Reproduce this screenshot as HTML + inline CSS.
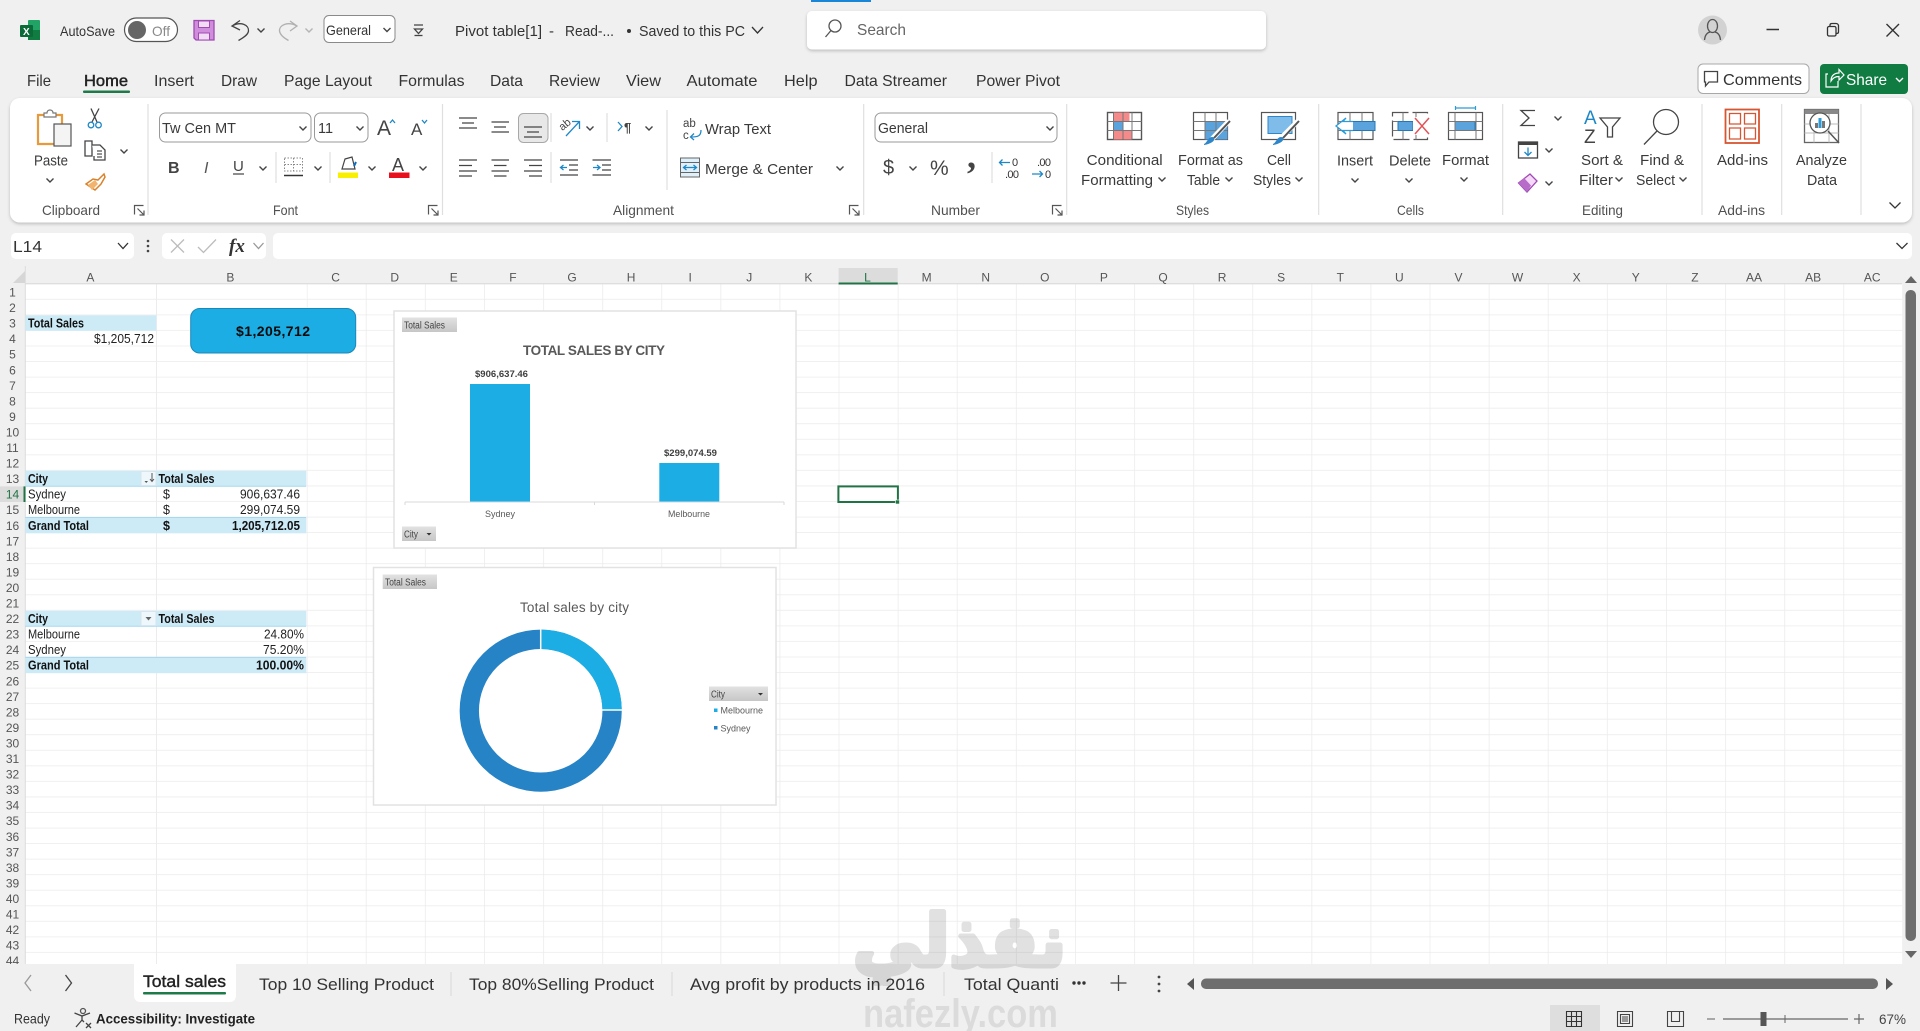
<!DOCTYPE html>
<html lang="en"><head><meta charset="utf-8"><title>Pivot table[1] - Excel</title>
<style>
html,body{margin:0;padding:0;width:1920px;height:1031px;overflow:hidden;background:#f0f0f0}
svg{display:block;position:absolute;left:0;top:0}
text{font-family:"Liberation Sans",sans-serif;fill:#333;font-size:15px}
.t{font-size:16px}
.r{font-size:14.5px;fill:#3a3a3a}
.g{font-size:14px;fill:#505050}
.rh{font-size:12px;fill:#555;text-anchor:middle}
.c{font-size:12.5px;fill:#222}
.b{font-weight:bold;fill:#111}
.cb{font-size:10px;fill:#444}
.i{fill:none;stroke:#555;stroke-width:1.3}
</style></head><body>
<svg width="1920" height="1031" viewBox="0 0 1920 1031" xmlns="http://www.w3.org/2000/svg">
<defs>
<path id="c" d="M-3.5 -1.5L0 2L3.5 -1.5" fill="none" stroke="#444" stroke-width="1.4"/>
<path id="l" d="M0 9V0H9M3 3L9.5 9.5M9.5 5V9.5H5" fill="none" stroke="#555" stroke-width="1.2"/>
<pattern id="ph" width="10" height="15.55" patternUnits="userSpaceOnUse" patternTransform="translate(0 284.2)"><rect y="14.75" width="10" height=".8" fill="#ececec"/></pattern>
<pattern id="pv" width="59.1" height="10" patternUnits="userSpaceOnUse" patternTransform="translate(306.7 0)"><rect width=".8" height="10" fill="#ececec"/></pattern>
<linearGradient id="bt" x1="0" y1="0" x2="0" y2="1"><stop offset="0" stop-color="#e2e2e2"/><stop offset="1" stop-color="#c6c6c6"/></linearGradient>
<filter id="sh" x="-2%" y="-10%" width="104%" height="125%"><feDropShadow dx="0" dy="1.5" stdDeviation="1.5" flood-color="#000" flood-opacity=".22"/></filter>
</defs>
<rect width="1920" height="1031" fill="#f0f0f0"/>

<!-- title bar -->
<rect x="811" y="0" width="60" height="2" fill="#1a86d8"/>
<rect x="28" y="20" width="12" height="20" rx="1" fill="#21a366"/><rect x="28" y="30" width="12" height="10" fill="#107c41"/><rect x="20" y="25" width="13" height="12" rx="1" fill="#0b6a38"/>
<text x="23" y="35" style="font-size:10px;font-weight:bold;fill:#fff">X</text>
<text x="60" y="36" textLength="55" lengthAdjust="spacingAndGlyphs" style="font-size:14px">AutoSave</text>
<rect x="124.500" y="18" width="53" height="23.500" rx="11.700" fill="#fff" stroke="#555" stroke-width="1.200"/><circle cx="137" cy="30" r="9" fill="#666"/>
<text x="152" y="36" textLength="18" lengthAdjust="spacingAndGlyphs" style="font-size:14px;fill:#8a8a8a">Off</text>
<path d="M194 20.500H214V40H196L194 38Z" fill="#d08ddc" stroke="#a04ab3" stroke-width="1.300"/><rect x="198.500" y="21" width="11" height="6.500" fill="#f2dcf5" stroke="#a04ab3"/><rect x="198.500" y="33" width="11" height="7" fill="#f2dcf5" stroke="#a04ab3"/>
<path d="M240 20.500L232 26L240 30M232 26C241 21 249 25 248.500 31C248 35 243 38 238.500 40.500" class="i" style="stroke:#444"/><use href="#c" x="261" y="30"/>
<path d="M290 21L297 26L290 31M297 26C288 21 279 25 279.500 31C280 35 284 38 288.500 40.500" class="i" style="stroke:#b0b0b0"/><use href="#c" x="309" y="30" opacity=".35"/>
<rect x="324" y="15.500" width="71" height="27" rx="5" fill="#fff" stroke="#8a8a8a"/>
<text x="326" y="35" textLength="45" lengthAdjust="spacingAndGlyphs" style="font-size:14px">General</text><use href="#c" x="387" y="29.500"/>
<path d="M414 25H423M414.500 29H422.500L418.500 33.500Z" class="i" style="stroke:#444"/><path d="M414.500 35.500H422.500" class="i" style="stroke:#444"/>
<text x="455" y="36" textLength="87" lengthAdjust="spacingAndGlyphs" class="t" style="font-size:15px">Pivot table[1]</text>
<text x="549" y="36" style="font-size:15px">-</text>
<text x="565" y="36" textLength="49" lengthAdjust="spacingAndGlyphs" style="font-size:15px">Read-...</text>
<circle cx="629" cy="31" r="2" fill="#333"/>
<text x="639" y="36" textLength="106" lengthAdjust="spacingAndGlyphs" style="font-size:15px">Saved to this PC</text>
<path d="M752 27L757.500 33L763 27" class="i" style="stroke:#333"/>
<rect x="807" y="11" width="459" height="38.500" rx="5" fill="#fff" filter="url(#sh)"/>
<circle cx="835" cy="26" r="6" class="i"/><path d="M831 30.500L825.500 37" class="i"/>
<text x="857" y="35" textLength="49" lengthAdjust="spacingAndGlyphs" style="font-size:16px;fill:#666">Search</text>
<circle cx="1712.500" cy="30" r="14.500" fill="#d2d2d2"/><ellipse cx="1712.500" cy="26" rx="5" ry="6.500" class="i"/><path d="M1704.500 40C1705 34 1708 32.500 1710 32M1720.500 40C1720 34 1717 32.500 1715 32" class="i"/>
<path d="M1766.500 29.500H1779" stroke="#333" stroke-width="1.500"/>
<rect x="1827.500" y="26.500" width="8.500" height="9.500" rx="1.500" class="i" style="stroke:#333"/><path d="M1830 26V25C1830 24 1831 23.500 1832 23.500H1836C1837.500 23.500 1838.500 24.500 1838.500 26V32C1838.500 33 1838 33.500 1836.500 33.500" class="i" style="stroke:#333"/>
<path d="M1886.500 24L1899 36.500M1899 24L1886.500 36.500" stroke="#333" stroke-width="1.400"/>

<!-- menu tabs -->
<text x="27" y="86" textLength="24" lengthAdjust="spacingAndGlyphs" class="t">File</text>
<text x="84" y="86" textLength="44" lengthAdjust="spacingAndGlyphs" class="t" style="fill:#222;stroke:#222;stroke-width:.45">Home</text>
<text x="154" y="86" textLength="40" lengthAdjust="spacingAndGlyphs" class="t">Insert</text>
<text x="221" y="86" textLength="36" lengthAdjust="spacingAndGlyphs" class="t">Draw</text>
<text x="284" y="86" textLength="88" lengthAdjust="spacingAndGlyphs" class="t">Page Layout</text>
<text x="398.500" y="86" textLength="66" lengthAdjust="spacingAndGlyphs" class="t">Formulas</text>
<text x="490" y="86" textLength="33" lengthAdjust="spacingAndGlyphs" class="t">Data</text>
<text x="549" y="86" textLength="51" lengthAdjust="spacingAndGlyphs" class="t">Review</text>
<text x="626" y="86" textLength="35" lengthAdjust="spacingAndGlyphs" class="t">View</text>
<text x="686.500" y="86" textLength="71" lengthAdjust="spacingAndGlyphs" class="t">Automate</text>
<text x="784" y="86" textLength="33.500" lengthAdjust="spacingAndGlyphs" class="t">Help</text>
<text x="844.500" y="86" textLength="102.500" lengthAdjust="spacingAndGlyphs" class="t">Data Streamer</text>
<text x="976" y="86" textLength="84" lengthAdjust="spacingAndGlyphs" class="t">Power Pivot</text>
<rect x="83" y="90.500" width="47" height="2.500" rx="1" fill="#1f7a4a"/>
<rect x="1698" y="64" width="111" height="29.500" rx="5" fill="#fff" stroke="#a8a8a8"/>
<path d="M1704.500 71.500H1717.500V82H1709L1705.500 86V82H1704.500Z" class="i" style="stroke:#444"/>
<text x="1723" y="85" textLength="79" lengthAdjust="spacingAndGlyphs" class="t">Comments</text>
<rect x="1820" y="64" width="88" height="30" rx="4" fill="#107c41"/>
<path d="M1828 74H1826V87H1838V81M1831 81C1831 75 1835 73 1839 73V69.500L1844 75L1839 80V76.500C1835 76.500 1833 78 1831 81Z" fill="none" stroke="#fff" stroke-width="1.200"/>
<text x="1846" y="85" textLength="41" lengthAdjust="spacingAndGlyphs" class="t" style="fill:#fff">Share</text>
<path d="M1896 78L1899.500 81.500L1903 78" fill="none" stroke="#fff" stroke-width="1.400"/>

<!-- ribbon -->
<rect x="10" y="98" width="1902" height="124.500" rx="10" fill="#fff" filter="url(#sh)"/>
<g stroke="#dfdfdf" stroke-width="1.200">
<path d="M148 104V215M442.500 104V215M863.700 104V215M1066.700 104V215M1318.700 104V215M1502.700 104V215M1702 104V215M1781.700 104V215M1861 104V215"/>
<path d="M276 152V183M330 152V183M551 113V142M551 152V183M607 113V142M667 110V190M992 152V183"/>
</g>

<!-- clipboard -->
<path d="M38 115H62V144H38Z" fill="#fff" stroke="#e69a3c" stroke-width="2.200"/>
<path d="M44 117V113H47C47 109 53 109 53 113H56V117Z" fill="#fff" stroke="#777" stroke-width="1.200"/>
<rect x="54" y="124" width="17" height="22" fill="#f4f4f4" stroke="#555" stroke-width="1.200"/>
<text x="34" y="165.500" textLength="34" lengthAdjust="spacingAndGlyphs" class="r">Paste</text><use href="#c" x="50" y="180"/>
<path d="M91 108.500L97 122M99 108.500L92 122" class="i" style="stroke:#444"/><circle cx="91" cy="125" r="2.800" class="i" style="stroke:#1e88c7"/><circle cx="98.500" cy="125" r="2.800" class="i" style="stroke:#1e88c7"/>
<path d="M85 141H92V156H85Z" class="i" style="stroke:#444"/><path d="M92 145H100L105 150V160H94V156" class="i" style="stroke:#444;fill:#fff"/><path d="M97 151H102M97 154H102M97 157H102" class="i"/>
<use href="#c" x="124" y="151"/>
<path d="M98 180L104 174L105 177L101 184L95 190L86 184L93 179Z" fill="none" stroke="#d9822b" stroke-width="1.500"/><path d="M88 185L95 180L98 184L92 190Z" fill="#f2b36d"/>
<text x="42" y="215" textLength="58" lengthAdjust="spacingAndGlyphs" class="g">Clipboard</text><use href="#l" x="134.500" y="205.500"/>

<!-- font -->
<rect x="159.500" y="113" width="151.500" height="29" rx="6" fill="#fff" stroke="#9a9a9a"/>
<text x="162" y="133" textLength="74" lengthAdjust="spacingAndGlyphs" class="r">Tw Cen MT</text><use href="#c" x="303" y="128"/>
<rect x="314.500" y="113" width="53.500" height="29" rx="6" fill="#fff" stroke="#9a9a9a"/>
<text x="318" y="133" class="r">11</text><use href="#c" x="360" y="128"/>
<text x="377" y="135" style="font-size:21px;fill:#444">A</text><path d="M390 123L392.500 120L395 123" fill="none" stroke="#1e88c7" stroke-width="1.300"/>
<text x="411" y="135" style="font-size:17px;fill:#444">A</text><path d="M422 120L424.500 123L427 120" fill="none" stroke="#1e88c7" stroke-width="1.300"/>
<text x="168" y="173" style="font-size:16px;font-weight:bold;fill:#444">B</text>
<text x="204" y="173" style="font-size:16px;font-style:italic;fill:#555">I</text>
<text x="233" y="171" style="font-size:15px;fill:#444">U</text><path d="M233 174H244" stroke="#444" stroke-width="1.200"/><use href="#c" x="263" y="168"/>
<path d="M284.500 158H302.500V171H284.500ZM293.500 158V171M284.500 164.500H302.500" fill="none" stroke="#888" stroke-width="1" stroke-dasharray="1.500 1.500"/><path d="M284 175.500H303" stroke="#333" stroke-width="1.600"/><use href="#c" x="318" y="168"/>
<path d="M345 159L352 157L355 169H342Z" fill="#fff" stroke="#444" stroke-width="1.200"/><path d="M354 166L356 162" stroke="#0f6cbd" stroke-width="2"/><rect x="338" y="172.500" width="20" height="5.500" fill="#f8f000"/><use href="#c" x="372" y="168"/>
<text x="392" y="171" style="font-size:18px;fill:#444">A</text><rect x="389" y="172.500" width="20.500" height="5.500" fill="#e8101c"/><use href="#c" x="423" y="168"/>
<text x="273" y="215" textLength="25" lengthAdjust="spacingAndGlyphs" class="g">Font</text><use href="#l" x="428.500" y="205.500"/>

<!-- alignment -->
<path d="M459 118H477M462 123H474M459 128H477" class="i" style="stroke:#444"/>
<path d="M491.500 122H509M494 127H506M491.500 132H509" class="i" style="stroke:#444"/>
<rect x="518.500" y="113.500" width="29.500" height="29" rx="5" fill="#e8e8e8" stroke="#a8a8a8"/><path d="M524 127H542M527 132H539M524 137H542" class="i" style="stroke:#444"/>
<text x="559" y="128" transform="rotate(-40 565 125)" style="font-size:11px;fill:#444">ab</text><path d="M566 136L579 122M572 121.500H579.500V129" class="i" style="stroke:#1e88c7"/><use href="#c" x="590" y="128"/>
<path d="M618 122L622 126.500L618 131" class="i" style="stroke:#1e88c7"/><text x="624" y="132" style="font-size:13px;font-weight:bold;fill:#444">¶</text><use href="#c" x="649" y="128"/>
<text x="683" y="127" style="font-size:11.500px;fill:#444">ab</text><text x="683" y="139" style="font-size:11.500px;fill:#444">c</text><path d="M701 130C701 136 698 137 691 137M694 133.500L690.500 137L694 140" class="i" style="stroke:#1e88c7"/>
<text x="705" y="134" textLength="66" lengthAdjust="spacingAndGlyphs" class="r">Wrap Text</text>
<path d="M459 160H477M459 165.500H472M459 171H477M459 176H472" class="i" style="stroke:#444"/>
<path d="M491.500 160H509M494 165.500H506.500M491.500 171H509M494 176H506.500" class="i" style="stroke:#444"/>
<path d="M524 160H542M529 165.500H542M524 171H542M529 176H542" class="i" style="stroke:#444"/>
<path d="M560 160H578M569 165H578M569 170H578M560 175H578" class="i" style="stroke:#444"/><path d="M560.500 167.500H567M563.500 165L560.500 167.500L563.500 170" class="i" style="stroke:#1e88c7"/>
<path d="M592.500 160H611M602 165H611M602 170H611M592.500 175H611" class="i" style="stroke:#444"/><path d="M593 167.500H599.500M597 165L600 167.500L597 170" class="i" style="stroke:#1e88c7"/>
<rect x="680.500" y="158" width="19" height="19" fill="#dff0fb" stroke="#666"/><path d="M680.500 162.500H699.500M680.500 172.500H699.500" stroke="#666"/><path d="M684 167.500H696M686.500 165L683.500 167.500L686.500 170M693.500 165L696.500 167.500L693.500 170" class="i" style="stroke:#1e88c7"/>
<text x="705" y="174" textLength="108" lengthAdjust="spacingAndGlyphs" class="r">Merge &amp; Center</text><use href="#c" x="840" y="168"/>
<text x="613" y="215" textLength="61" lengthAdjust="spacingAndGlyphs" class="g">Alignment</text><use href="#l" x="849.500" y="205.500"/>

<!-- number -->
<rect x="875" y="113" width="182" height="29" rx="6" fill="#fff" stroke="#9a9a9a"/>
<text x="878" y="133" textLength="50" lengthAdjust="spacingAndGlyphs" class="r">General</text><use href="#c" x="1050" y="128"/>
<text x="883" y="174" style="font-size:20px;fill:#444">$</text><use href="#c" x="913" y="168"/>
<text x="930" y="175" style="font-size:21px;fill:#444">%</text>
<text x="967" y="168" style="font-size:36px;font-weight:bold;font-family:'Liberation Serif',serif;fill:#444">,</text>
<text x="1012" y="166" textLength="7" style="font-size:11px">0</text><text x="1005" y="178" textLength="14" style="font-size:11px">.00</text><path d="M999.500 162.500H1010M1002.500 159.500L999.500 162.500L1002.500 165.500" class="i" style="stroke:#1e88c7"/>
<text x="1037" y="166" textLength="14" style="font-size:11px">.00</text><text x="1045" y="178" textLength="7" style="font-size:11px">0</text><path d="M1032 174H1042M1039.500 171L1042.500 174L1039.500 177" class="i" style="stroke:#1e88c7"/>
<text x="931" y="215" textLength="49" lengthAdjust="spacingAndGlyphs" class="g">Number</text><use href="#l" x="1052.500" y="205.500"/>

<!-- styles -->
<rect x="1107.500" y="112.500" width="34" height="27" fill="#fff" stroke="#555" stroke-width="1.400"/>
<rect x="1113.500" y="112.500" width="16" height="9" fill="#f58a8a"/><rect x="1113.500" y="130.500" width="18" height="9" fill="#f58a8a"/><rect x="1113.500" y="121.500" width="9" height="9" fill="#5ba3dd"/>
<path d="M1107.500 121.500H1141.500M1107.500 130.500H1141.500M1113.500 112.500V139.500M1123 112.500V139.500M1132 112.500V139.500" stroke="#777" fill="none"/>
<text x="1086.700" y="165" textLength="76" lengthAdjust="spacingAndGlyphs" class="r">Conditional</text>
<text x="1081" y="185" textLength="72" lengthAdjust="spacingAndGlyphs" class="r">Formatting</text><use href="#c" x="1162" y="179"/>
<rect x="1193.500" y="112.500" width="34" height="27" fill="#fff" stroke="#555" stroke-width="1.200"/><rect x="1205" y="121.500" width="22.500" height="18" fill="#5ba3dd"/><path d="M1193.500 121.500H1227.500M1193.500 130.500H1227.500M1205 112.500V139.500M1216 112.500V139.500" stroke="#777" fill="none"/>
<path d="M1229 121L1212 139" stroke="#fff" stroke-width="5"/><path d="M1230 121L1214 138" stroke="#555" stroke-width="2"/><path d="M1204 144C1207 143 1208 137 1212 137C1216 137 1216 143 1204 145Z" fill="#2e86c9"/>
<text x="1178" y="165" textLength="65" lengthAdjust="spacingAndGlyphs" class="r">Format as</text>
<text x="1187" y="185" textLength="33" lengthAdjust="spacingAndGlyphs" class="r">Table</text><use href="#c" x="1229" y="179"/>
<rect x="1261.500" y="112.500" width="34" height="27" fill="#fff" stroke="#555" stroke-width="1.200"/><rect x="1268" y="116.500" width="24" height="17" fill="#7fbcea" stroke="#2e86c9"/>
<path d="M1298 121L1281 138" stroke="#fff" stroke-width="5"/><path d="M1299 121L1283 138" stroke="#555" stroke-width="2"/><path d="M1273 144C1276 143 1277 137 1281 137C1285 137 1285 143 1273 145Z" fill="#2e86c9"/>
<text x="1267" y="165" textLength="24" lengthAdjust="spacingAndGlyphs" class="r">Cell</text>
<text x="1253" y="185" textLength="38" lengthAdjust="spacingAndGlyphs" class="r">Styles</text><use href="#c" x="1299" y="179"/>
<text x="1176" y="215" textLength="33" lengthAdjust="spacingAndGlyphs" class="g">Styles</text>

<!-- cells -->
<rect x="1338" y="112.500" width="35" height="27" fill="#fff" stroke="#555" stroke-width="1.200"/><rect x="1352" y="121.500" width="23" height="9" fill="#5ba3dd" stroke="#2178b5"/><path d="M1338 121.500H1352M1338 130.500H1352M1350 112.500V139.500M1362 112.500V121.500M1362 130.500V139.500" stroke="#777" fill="none"/>
<path d="M1353 121.500H1343L1346 118L1336 126L1346 134L1343 130.500H1353" fill="#fff" stroke="#2e9ad6" stroke-width="1.300"/>
<text x="1337" y="165.500" textLength="36" lengthAdjust="spacingAndGlyphs" class="r">Insert</text><use href="#c" x="1355" y="180"/>
<rect x="1392.500" y="112.500" width="35" height="27" fill="#fff" stroke="#555" stroke-width="1.200" stroke-dasharray="16 4"/><rect x="1398" y="121.500" width="15" height="9" fill="#5ba3dd" stroke="#2178b5"/><path d="M1392.500 121.500H1398M1392.500 130.500H1398M1403 112.500V121.500M1403 130.500V139.500M1416 112.500V139.500" stroke="#777" fill="none"/>
<rect x="1413" y="117" width="18" height="18" fill="#fff"/><path d="M1415 118L1429 134M1429 118L1415 134" stroke="#e0545a" stroke-width="1.500"/>
<text x="1389" y="165.500" textLength="42" lengthAdjust="spacingAndGlyphs" class="r">Delete</text><use href="#c" x="1409" y="180"/>
<rect x="1448.500" y="112.500" width="34" height="27" fill="#fff" stroke="#555" stroke-width="1.200"/><rect x="1455" y="121.500" width="20" height="9" fill="#5ba3dd" stroke="#2178b5"/><path d="M1448.500 121.500H1482.500M1448.500 130.500H1482.500M1455 112.500V139.500M1476 112.500V139.500" stroke="#777" fill="none"/>
<path d="M1455.500 108H1475.500M1455.500 106V110M1475.500 106V110" stroke="#2e9ad6" stroke-width="1.200" fill="none"/>
<text x="1442" y="165" textLength="47" lengthAdjust="spacingAndGlyphs" class="r">Format</text><use href="#c" x="1464" y="179"/>
<text x="1397" y="215" textLength="27" lengthAdjust="spacingAndGlyphs" class="g">Cells</text>

<!-- editing -->
<path d="M1535 110.500H1521L1529 118L1521 125.500H1535" class="i" style="stroke:#444"/><use href="#c" x="1558" y="118"/>
<rect x="1518.500" y="142" width="19" height="16" fill="#fff" stroke="#444" stroke-width="1.300"/><rect x="1518.500" y="142" width="19" height="3" fill="#444"/><path d="M1528 147.500V155M1524.500 152L1528 155.500L1531.500 152" class="i" style="stroke:#1e88c7"/><use href="#c" x="1549" y="150"/>
<path d="M1518.500 183L1530 174L1537 181L1527 192Z" fill="#f6d9f8" stroke="#a04ab3" stroke-width="1.300"/><path d="M1518.500 183L1524 178L1531 185.500L1527 192Z" fill="#b66cc8"/><use href="#c" x="1549" y="183"/>
<text x="1584" y="124" style="font-size:19px;fill:#1e88c7">A</text><text x="1584" y="143" style="font-size:19px;fill:#444">Z</text>
<path d="M1600 118H1620L1612.500 127V137H1607.500V127Z" class="i" style="stroke:#444"/>
<text x="1581" y="165" textLength="42" lengthAdjust="spacingAndGlyphs" class="r">Sort &amp;</text>
<text x="1579" y="185" textLength="34" lengthAdjust="spacingAndGlyphs" class="r">Filter</text><use href="#c" x="1619" y="179"/>
<circle cx="1666" cy="122" r="12.500" class="i" style="stroke:#444"/><path d="M1657 131L1644 144.500" class="i" style="stroke:#444"/>
<text x="1640" y="165" textLength="44" lengthAdjust="spacingAndGlyphs" class="r">Find &amp;</text>
<text x="1636" y="185" textLength="39" lengthAdjust="spacingAndGlyphs" class="r">Select</text><use href="#c" x="1683" y="179"/>
<text x="1582" y="215" textLength="41" lengthAdjust="spacingAndGlyphs" class="g">Editing</text>
<rect x="1725.500" y="109.500" width="33.500" height="33.500" fill="#fff" stroke="#d65532" stroke-width="1.800"/>
<path d="M1729.500 113.500H1740.500V124H1729.500ZM1744.500 113.500H1755.500V124H1744.500ZM1729.500 128H1740.500V139H1729.500ZM1744.500 128H1755.500V139H1744.500Z" fill="#fff" stroke="#d65532" stroke-width="1.300"/>
<text x="1717" y="165" textLength="51" lengthAdjust="spacingAndGlyphs" class="r">Add-ins</text>
<text x="1718" y="215" textLength="47" lengthAdjust="spacingAndGlyphs" class="g">Add-ins</text>
<rect x="1804.500" y="109.500" width="34" height="33" fill="#fff" stroke="#666" stroke-width="1.300"/><rect x="1804.500" y="109.500" width="34" height="4.500" fill="#888"/><path d="M1804.500 124H1838.500M1804.500 133H1838.500M1814 114V142.500M1829 114V142.500" stroke="#bbb" fill="none"/>
<circle cx="1820" cy="123" r="10" fill="#fff" stroke="#555" stroke-width="1.300"/><path d="M1828 131L1839 143" stroke="#555" stroke-width="1.500"/><rect x="1815" y="123" width="3" height="5" fill="#777"/><rect x="1818.500" y="118" width="3" height="10" fill="#2e9ad6"/><rect x="1822" y="121" width="3" height="7" fill="#777"/>
<text x="1796" y="165" textLength="51" lengthAdjust="spacingAndGlyphs" class="r">Analyze</text>
<text x="1807" y="185" textLength="30" lengthAdjust="spacingAndGlyphs" class="r">Data</text>
<path d="M1889.500 202.500L1895 208L1900.500 202.500" class="i" style="stroke:#333"/>

<!-- formula bar -->
<rect x="11" y="233" width="123" height="26" rx="5" fill="#fff"/>
<rect x="162" y="233" width="104" height="26" rx="5" fill="#fff"/>
<rect x="273" y="233" width="1639" height="26" rx="5" fill="#fff"/>
<text x="13" y="252" textLength="29" lengthAdjust="spacingAndGlyphs" class="t">L14</text>
<path d="M118 243L123 248.500L128 243" class="i" style="stroke:#333"/>
<circle cx="148" cy="241" r="1.300" fill="#444"/><circle cx="148" cy="246" r="1.300" fill="#444"/><circle cx="148" cy="251" r="1.300" fill="#444"/>
<path d="M171 239.500L184 252.500M184 239.500L171 252.500" stroke="#bcbcbc" stroke-width="1.300"/>
<path d="M198 247L203.500 252.500L216 239.500" fill="none" stroke="#bcbcbc" stroke-width="1.300"/>
<text x="229" y="252" style="font-family:'Liberation Serif',serif;font-style:italic;font-weight:bold;font-size:19px;fill:#333">fx</text>
<path d="M253.500 243L258.500 248.500L263.500 243" class="i" style="stroke:#999"/>
<path d="M1896.500 243L1902 248.500L1907.500 243" class="i" style="stroke:#333"/>

<!-- sheet -->
<rect x="25.300" y="284" width="1877" height="680" fill="#fff"/>
<rect x="25.300" y="284" width="1877" height="680" fill="url(#ph)"/>
<rect x="306.700" y="284" width="1596" height="680" fill="url(#pv)"/>
<path d="M156.500 284V964" stroke="#ececec"/>
<path d="M25 283.700H1902" stroke="#d8d8d8"/><path d="M25.300 266V964" stroke="#dcdcdc"/>
<path d="M13 283L25 283V271Z" fill="#d6d6d6"/>
<rect x="838.600" y="268" width="59.100" height="16" fill="#dcdcdc"/><rect x="838.600" y="282.500" width="59.100" height="2" fill="#217346"/>
<rect x="0" y="486.400" width="25" height="15.600" fill="#dcdcdc"/><rect x="23.500" y="486.400" width="2" height="15.600" fill="#217346"/>

<g transform="translate(-.6 0)">
<text class="rh" x="91" y="281.500">A</text><text class="rh" x="231" y="281.500">B</text><text class="rh" x="336.200" y="281.500">C</text><text class="rh" x="395.300" y="281.500">D</text><text class="rh" x="454.400" y="281.500">E</text><text class="rh" x="513.500" y="281.500">F</text><text class="rh" x="572.600" y="281.500">G</text><text class="rh" x="631.700" y="281.500">H</text><text class="rh" x="690.800" y="281.500">I</text><text class="rh" x="749.900" y="281.500">J</text><text class="rh" x="809" y="281.500">K</text><text class="rh" x="868.100" y="281.500" style="fill:#217346">L</text><text class="rh" x="927.200" y="281.500">M</text><text class="rh" x="986.300" y="281.500">N</text><text class="rh" x="1045.400" y="281.500">O</text><text class="rh" x="1104.500" y="281.500">P</text><text class="rh" x="1163.600" y="281.500">Q</text><text class="rh" x="1222.700" y="281.500">R</text><text class="rh" x="1281.800" y="281.500">S</text><text class="rh" x="1340.900" y="281.500">T</text><text class="rh" x="1400" y="281.500">U</text><text class="rh" x="1459.100" y="281.500">V</text><text class="rh" x="1518.200" y="281.500">W</text><text class="rh" x="1577.300" y="281.500">X</text><text class="rh" x="1636.400" y="281.500">Y</text><text class="rh" x="1695.500" y="281.500">Z</text><text class="rh" x="1754.600" y="281.500">AA</text><text class="rh" x="1813.700" y="281.500">AB</text><text class="rh" x="1872.800" y="281.500">AC</text>
</g>
<g>
<text class="rh" x="12.500" y="296.500">1</text><text class="rh" x="12.500" y="312">2</text><text class="rh" x="12.500" y="327.600">3</text><text class="rh" x="12.500" y="343.200">4</text><text class="rh" x="12.500" y="358.700">5</text><text class="rh" x="12.500" y="374.300">6</text><text class="rh" x="12.500" y="389.800">7</text><text class="rh" x="12.500" y="405.400">8</text><text class="rh" x="12.500" y="420.900">9</text><text class="rh" x="12.500" y="436.500">10</text><text class="rh" x="12.500" y="452">11</text><text class="rh" x="12.500" y="467.600">12</text><text class="rh" x="12.500" y="483.100">13</text><text class="rh" x="12.500" y="498.700" style="fill:#217346">14</text><text class="rh" x="12.500" y="514.200">15</text><text class="rh" x="12.500" y="529.800">16</text><text class="rh" x="12.500" y="545.300">17</text><text class="rh" x="12.500" y="560.900">18</text><text class="rh" x="12.500" y="576.400">19</text><text class="rh" x="12.500" y="592">20</text><text class="rh" x="12.500" y="607.500">21</text><text class="rh" x="12.500" y="623">22</text><text class="rh" x="12.500" y="638.600">23</text><text class="rh" x="12.500" y="654.200">24</text><text class="rh" x="12.500" y="669.700">25</text><text class="rh" x="12.500" y="685.300">26</text><text class="rh" x="12.500" y="700.800">27</text><text class="rh" x="12.500" y="716.400">28</text><text class="rh" x="12.500" y="731.900">29</text><text class="rh" x="12.500" y="747.500">30</text><text class="rh" x="12.500" y="763">31</text><text class="rh" x="12.500" y="778.600">32</text><text class="rh" x="12.500" y="794.100">33</text><text class="rh" x="12.500" y="809.700">34</text><text class="rh" x="12.500" y="825.200">35</text><text class="rh" x="12.500" y="840.800">36</text><text class="rh" x="12.500" y="856.300">37</text><text class="rh" x="12.500" y="871.900">38</text><text class="rh" x="12.500" y="887.400">39</text><text class="rh" x="12.500" y="903">40</text><text class="rh" x="12.500" y="918.500">41</text><text class="rh" x="12.500" y="934">42</text><text class="rh" x="12.500" y="949.600">43</text><text class="rh" x="12.500" y="965">44</text>
</g>

<!-- table fills -->
<g fill="#cdeaf7">
<rect x="25.300" y="315.300" width="131" height="15.500"/>
<rect x="25.300" y="470.800" width="281" height="15.500"/>
<rect x="25.300" y="517.500" width="281" height="15.800"/>
<rect x="25.300" y="610.800" width="281" height="15.500"/>
<rect x="25.300" y="657.400" width="281" height="15.800"/>
</g>
<path d="M25.300 486.300H306M25.300 517.500H306M25.300 626.300H306M25.300 657.400H306" stroke="#a6d8ef"/>
<text class="c b" x="28" y="327.500" textLength="56" lengthAdjust="spacingAndGlyphs">Total Sales</text>
<text class="c" x="154" y="343" text-anchor="end" textLength="60" lengthAdjust="spacingAndGlyphs">$1,205,712</text>
<text class="c b" x="28" y="483" textLength="20" lengthAdjust="spacingAndGlyphs">City</text>
<rect x="141" y="471.500" width="15" height="14" fill="#eef7fb" stroke="#d5e6ee"/><path d="M144.500 481H148L146.200 483Z" fill="#555"/><path d="M152 473V481M150 479L152 481.500L154 479" fill="none" stroke="#555"/>
<text class="c b" x="158.500" y="483" textLength="56" lengthAdjust="spacingAndGlyphs">Total Sales</text>
<text class="c" x="28" y="498.500" textLength="38" lengthAdjust="spacingAndGlyphs">Sydney</text><text class="c" x="163" y="498.500">$</text><text class="c" x="300" y="498.500" text-anchor="end" textLength="60" lengthAdjust="spacingAndGlyphs">906,637.46</text>
<text class="c" x="28" y="514" textLength="52" lengthAdjust="spacingAndGlyphs">Melbourne</text><text class="c" x="163" y="514">$</text><text class="c" x="300" y="514" text-anchor="end" textLength="60" lengthAdjust="spacingAndGlyphs">299,074.59</text>
<text class="c b" x="28" y="529.800" textLength="61" lengthAdjust="spacingAndGlyphs">Grand Total</text><text class="c b" x="163" y="529.800">$</text><text class="c b" x="300" y="529.800" text-anchor="end" textLength="68" lengthAdjust="spacingAndGlyphs">1,205,712.05</text>
<text class="c b" x="28" y="623" textLength="20" lengthAdjust="spacingAndGlyphs">City</text>
<rect x="141" y="611.500" width="15" height="14" fill="#eef7fb" stroke="#d5e6ee"/><path d="M145.500 617H151.500L148.500 620.500Z" fill="#666"/>
<text class="c b" x="158.500" y="623" textLength="56" lengthAdjust="spacingAndGlyphs">Total Sales</text>
<text class="c" x="28" y="638.500" textLength="52" lengthAdjust="spacingAndGlyphs">Melbourne</text><text class="c" x="304" y="638.500" text-anchor="end" textLength="40" lengthAdjust="spacingAndGlyphs">24.80%</text>
<text class="c" x="28" y="654" textLength="38" lengthAdjust="spacingAndGlyphs">Sydney</text><text class="c" x="304" y="654" text-anchor="end" textLength="41" lengthAdjust="spacingAndGlyphs">75.20%</text>
<text class="c b" x="28" y="669.500" textLength="61" lengthAdjust="spacingAndGlyphs">Grand Total</text><text class="c b" x="304" y="669.500" text-anchor="end" textLength="48" lengthAdjust="spacingAndGlyphs">100.00%</text>

<!-- kpi shape -->
<rect x="190.700" y="308.500" width="165" height="44.500" rx="9" fill="#1cade4" stroke="#1b88b8"/>
<text x="273" y="336" text-anchor="middle" textLength="74" lengthAdjust="spacing" style="font-size:14px;font-weight:bold;fill:#0a0a0a">$1,205,712</text>

<!-- selected cell -->
<rect x="838.400" y="486.400" width="59.500" height="15.600" fill="none" stroke="#217346" stroke-width="2"/><rect x="895.500" y="500" width="4" height="4" fill="#217346" stroke="#fff" stroke-width=".6"/>

<!-- chart 1 -->
<rect x="394" y="311" width="402" height="237" fill="#fff" stroke="#e2e2e2" stroke-width="1.500"/>
<rect x="402" y="317.500" width="55" height="14.500" fill="url(#bt)"/>
<text x="404" y="328.500" textLength="41" lengthAdjust="spacingAndGlyphs" class="cb">Total Sales</text>
<text x="594" y="355" text-anchor="middle" textLength="142" lengthAdjust="spacing" style="font-size:13.500px;font-weight:bold;fill:#595959">TOTAL SALES BY CITY</text>
<text x="475" y="377" textLength="53" lengthAdjust="spacingAndGlyphs" style="font-size:9.500px;font-weight:bold;fill:#404040">$906,637.46</text>
<rect x="470" y="384" width="60" height="117.500" fill="#1cade4"/>
<text x="664" y="456" textLength="53" lengthAdjust="spacingAndGlyphs" style="font-size:9.500px;font-weight:bold;fill:#404040">$299,074.59</text>
<rect x="659.300" y="463" width="60" height="38.500" fill="#1cade4"/>
<path d="M405 502H784M405 502V505M594.500 502V505M784 502V505" stroke="#d9d9d9" fill="none"/>
<text x="500" y="517" text-anchor="middle" textLength="30" lengthAdjust="spacingAndGlyphs" style="font-size:9.500px;fill:#595959">Sydney</text>
<text x="689" y="517" text-anchor="middle" textLength="42" lengthAdjust="spacingAndGlyphs" style="font-size:9.500px;fill:#595959">Melbourne</text>
<rect x="402" y="526.500" width="34" height="14.500" fill="url(#bt)"/>
<text x="404" y="537.500" textLength="14" lengthAdjust="spacingAndGlyphs" class="cb">City</text><path d="M426.500 533H431.500L429 535.500Z" fill="#333"/>

<!-- chart 2 -->
<rect x="373.500" y="567.500" width="402.500" height="237.500" fill="#fff" stroke="#e2e2e2" stroke-width="1.500"/>
<rect x="382.700" y="574.500" width="54.300" height="14.500" fill="url(#bt)"/>
<text x="385" y="585.500" textLength="41" lengthAdjust="spacingAndGlyphs" class="cb">Total Sales</text>
<text x="574.500" y="612" text-anchor="middle" textLength="109" lengthAdjust="spacing" style="font-size:13.500px;fill:#595959">Total sales by city</text>
<circle cx="540.700" cy="710.700" r="71.400" fill="none" stroke="#2683c6" stroke-width="19.300"/>
<path d="M540.700 639.300A71.400 71.400 0 0 1 612.100 709.700" fill="none" stroke="#1cade4" stroke-width="19.300"/>
<path d="M540.700 628V651M601 710H623" stroke="#fff" stroke-width="1.500"/>
<rect x="709" y="686.500" width="59" height="14.500" fill="url(#bt)"/>
<text x="711" y="697.500" textLength="14" lengthAdjust="spacingAndGlyphs" class="cb">City</text><path d="M758 693H763L760.500 695.500Z" fill="#333"/>
<rect x="714" y="708.500" width="3.500" height="3.500" fill="#1cade4"/>
<text x="720.500" y="713.500" textLength="42.500" lengthAdjust="spacingAndGlyphs" style="font-size:9.500px;fill:#595959">Melbourne</text>
<rect x="714" y="726" width="3.500" height="3.500" fill="#2683c6"/>
<text x="720.500" y="731.500" textLength="30" lengthAdjust="spacingAndGlyphs" style="font-size:9.500px;fill:#595959">Sydney</text>

<!-- v scroll -->
<rect x="1902.400" y="266" width="17.600" height="698" fill="#f0f0f0"/>
<path d="M1905 283L1911 276L1917 283Z" fill="#666"/>
<rect x="1905.500" y="290" width="10.500" height="651" rx="5" fill="#6e6e6e"/>
<path d="M1905 951L1911 958L1917 951Z" fill="#666"/>

<!-- tab bar -->
<rect x="0" y="964" width="1920" height="67" fill="#f0f0f0"/>
<path d="M31 975L25 983L31 991" fill="none" stroke="#999" stroke-width="1.300"/>
<path d="M65.500 975L71.500 983L65.500 991" fill="none" stroke="#444" stroke-width="1.300"/>
<path d="M134 964H236V995C236 999 234 1002 230 1002H140C136 1002 134 999 134 995Z" fill="#fff"/>
<text x="143" y="987" textLength="83" lengthAdjust="spacingAndGlyphs" style="font-size:17px;fill:#222;stroke:#222;stroke-width:.4">Total sales</text>
<rect x="143" y="992" width="83" height="2.500" rx="1" fill="#1f7a4a"/>
<text x="259" y="990" textLength="175" lengthAdjust="spacingAndGlyphs" style="font-size:17px">Top 10 Selling Product</text>
<text x="469" y="990" textLength="185" lengthAdjust="spacingAndGlyphs" style="font-size:17px">Top 80%Selling Product</text>
<text x="690" y="990" textLength="235" lengthAdjust="spacingAndGlyphs" style="font-size:17px">Avg profit by products in 2016</text>
<text x="964" y="990" textLength="95" lengthAdjust="spacingAndGlyphs" style="font-size:17px">Total Quanti</text>
<path d="M451 972V996M672 972V996M944 972V996" stroke="#d8d8d8"/>
<circle cx="1074" cy="983" r="1.700" fill="#333"/><circle cx="1079" cy="983" r="1.700" fill="#333"/><circle cx="1084" cy="983" r="1.700" fill="#333"/>
<path d="M1118.500 975V991M1110.500 983H1126.500" stroke="#444" stroke-width="1.300"/>
<circle cx="1159" cy="977" r="1.400" fill="#444"/><circle cx="1159" cy="984" r="1.400" fill="#444"/><circle cx="1159" cy="991" r="1.400" fill="#444"/>
<path d="M1194 978V990L1187 984Z" fill="#555"/>
<rect x="1201" y="978.500" width="677" height="10.500" rx="5" fill="#6e6e6e"/>
<path d="M1886 978V990L1893 984Z" fill="#555"/>

<!-- status bar -->
<text x="14" y="1023.500" textLength="36" lengthAdjust="spacingAndGlyphs" style="font-size:14px">Ready</text>
<circle cx="83" cy="1011" r="2.500" class="i"/><path d="M74.500 1013L82 1016L90 1013M82 1016V1020M82 1020L76 1027M82 1020L84 1022M86 1023L91 1028M91 1023L86 1028" class="i" style="stroke:#444"/>
<text x="96" y="1023.500" textLength="159" lengthAdjust="spacingAndGlyphs" style="font-size:14px;font-weight:bold;fill:#222">Accessibility: Investigate</text>
<rect x="1550" y="1005" width="50" height="26" fill="#dedede"/>
<path d="M1566.500 1011.500H1581.500V1026.500H1566.500ZM1566.500 1016.500H1581.500M1566.500 1021.500H1581.500M1571.500 1011.500V1026.500M1576.500 1011.500V1026.500" fill="none" stroke="#333" stroke-width="1.100"/>
<path d="M1617.500 1011.500H1632.500V1026.500H1617.500ZM1620.500 1014.500H1629.500V1023.500H1620.500ZM1622 1017H1628M1622 1019H1628M1622 1021H1628" fill="none" stroke="#444" stroke-width="1.100"/>
<path d="M1667.500 1011.500H1683.500V1026.500H1667.500ZM1671.500 1011.500V1021.500H1679.500V1011.500" fill="none" stroke="#444" stroke-width="1.100"/>
<path d="M1707 1019H1715" stroke="#777" stroke-width="1.200"/>
<path d="M1723 1019H1848" stroke="#666" stroke-width="1.200"/><path d="M1785 1015V1023" stroke="#666"/>
<rect x="1760.500" y="1012" width="6" height="14" fill="#555"/>
<path d="M1859 1014V1024M1854 1019H1864" stroke="#666" stroke-width="1.200"/>
<text x="1879" y="1024" textLength="27" lengthAdjust="spacingAndGlyphs" style="font-size:14px;fill:#444">67%</text>

<!-- watermark -->
<g opacity=".17">
<text x="853" y="966" textLength="213" lengthAdjust="spacingAndGlyphs" style="font-family:'DejaVu Sans',sans-serif;font-weight:bold;font-size:72px;fill:#555;stroke:#555;stroke-width:5;stroke-linejoin:round">نفذلي</text>
<text x="863" y="1027" textLength="195" lengthAdjust="spacingAndGlyphs" style="font-size:40px;font-weight:bold;fill:#777">nafezly.com</text>
</g>
</svg>
</body></html>
